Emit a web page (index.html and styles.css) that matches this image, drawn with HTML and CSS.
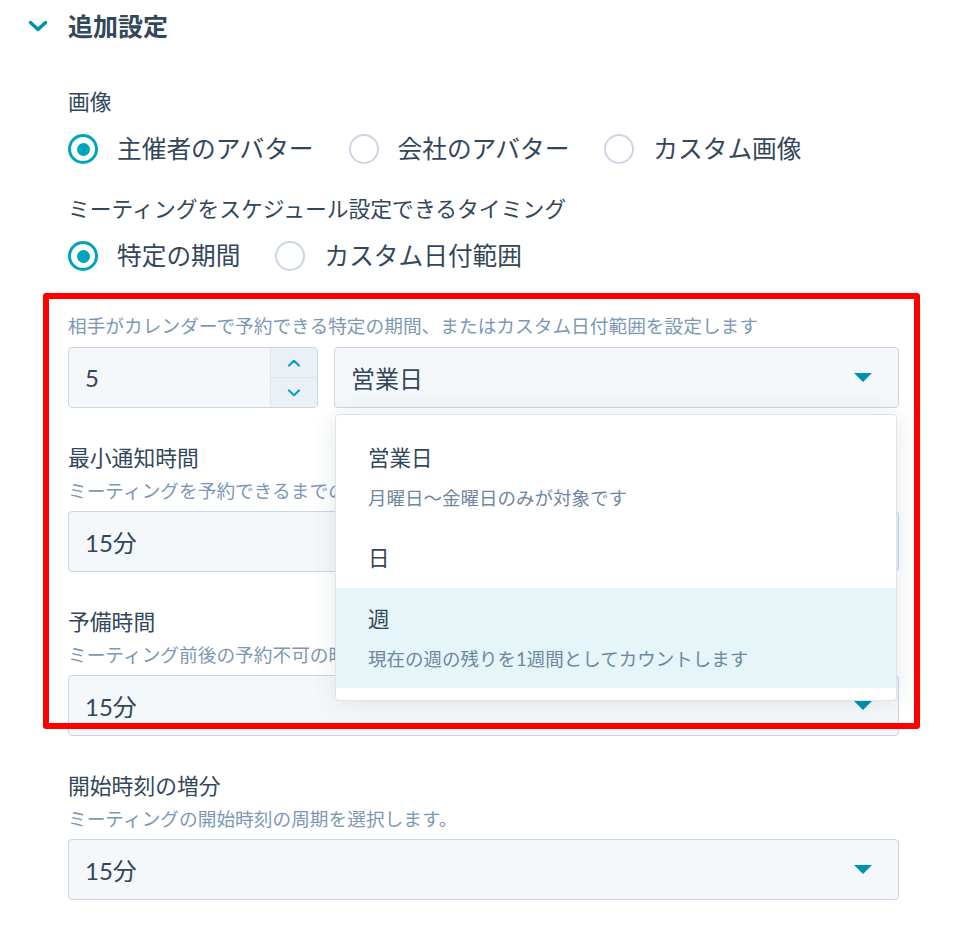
FILE: index.html
```html
<!DOCTYPE html>
<html lang="ja">
<head>
<meta charset="UTF-8">
<title>追加設定</title>
<link rel="stylesheet" href="styles.css">
</head>
<body>

<div class="section-head">
    <svg class="toggle-icon" width="20" height="12" viewBox="0 0 20 12"><path d="M2.5 2.5 L10 9.5 L17.5 2.5"/></svg>
    <h2 class="section-title">追加設定</h2>
</div>

<div class="settings">

    <!-- 画像 -->
    <div class="group group-image">
        <div class="field-label">画像</div>
        <div class="radio-group">
            <label class="radio checked"><span class="radio-dot"></span>主催者のアバター</label>
            <label class="radio"><span class="radio-dot"></span>会社のアバター</label>
            <label class="radio"><span class="radio-dot"></span>カスタム画像</label>
        </div>
    </div>

    <!-- タイミング -->
    <div class="group group-timing">
        <div class="field-label">ミーティングをスケジュール設定できるタイミング</div>
        <div class="radio-group">
            <label class="radio checked"><span class="radio-dot"></span>特定の期間</label>
            <label class="radio"><span class="radio-dot"></span>カスタム日付範囲</label>
        </div>
    </div>

    <!-- 期間 -->
    <div class="group group-range">
        <div class="help">相手がカレンダーで予約できる特定の期間、またはカスタム日付範囲を設定します</div>
        <div class="input-row">
            <div class="number-input">
                <span class="number-value">5</span>
                <div class="stepper">
                    <span class="step">
                        <svg width="14" height="8" viewBox="0 0 14 8"><path d="M2 6.5 L7 1.8 L12 6.5"/></svg>
                    </span>
                    <span class="step">
                        <svg width="14" height="8" viewBox="0 0 14 8"><path d="M2 1.5 L7 6.2 L12 1.5"/></svg>
                    </span>
                </div>
            </div>
            <div class="select open">
                <span class="select-value">営業日</span>
                <svg class="caret" width="18" height="9" viewBox="0 0 18 9"><polygon points="0,0 18,0 9,9"/></svg>

                <div class="dropdown">
                    <div class="option">
                        <div class="option-label">営業日</div>
                        <div class="option-desc">月曜日～金曜日のみが対象です</div>
                    </div>
                    <div class="option">
                        <div class="option-label">日</div>
                    </div>
                    <div class="option active">
                        <div class="option-label">週</div>
                        <div class="option-desc">現在の週の残りを1週間としてカウントします</div>
                    </div>
                </div>
            </div>
        </div>
    </div>

    <!-- 最小通知時間 -->
    <div class="group field">
        <div class="field-label">最小通知時間</div>
        <div class="help">ミーティングを予約できるまでの最短時間を設定します</div>
        <div class="select">
            <span class="select-value">15分</span>
            <svg class="caret" width="18" height="9" viewBox="0 0 18 9"><polygon points="0,0 18,0 9,9"/></svg>
        </div>
    </div>

    <!-- 予備時間 -->
    <div class="group field">
        <div class="field-label">予備時間</div>
        <div class="help">ミーティング前後の予約不可の時間を設定します</div>
        <div class="select">
            <span class="select-value">15分</span>
            <svg class="caret" width="18" height="9" viewBox="0 0 18 9"><polygon points="0,0 18,0 9,9"/></svg>
        </div>
    </div>

    <!-- 開始時刻の増分 -->
    <div class="group field">
        <div class="field-label">開始時刻の増分</div>
        <div class="help">ミーティングの開始時刻の周期を選択します。</div>
        <div class="select">
            <span class="select-value">15分</span>
            <svg class="caret" width="18" height="9" viewBox="0 0 18 9"><polygon points="0,0 18,0 9,9"/></svg>
        </div>
    </div>

</div>

<!-- annotation frame -->
<div class="annotation"></div>

</body>
</html>
```

FILE: styles.css
```css
body {
    margin: 0;
    font-family: Lato, "Noto Sans CJK JP", sans-serif;
    color: #33475b;
    background: #fff;
    position: relative;
}
.section-head {
    display: flex;
    align-items: center;
    gap: 20px;
    padding: 11px 0 0 28px;
}
.toggle-icon path {
    fill: none;
    stroke: #0091ae;
    stroke-width: 3.5;
    stroke-linecap: round;
    stroke-linejoin: round;
}
.section-title {
    margin: 0;
    font-size: 25px;
    font-weight: 700;
    line-height: 30px;
}
.settings {
    padding: 0 56px 0 68px;
}
.field-label {
    font-size: 21.8px;
    line-height: 28px;
}
.help {
    font-size: 18.7px;
    line-height: 26px;
    color: #7c98b6;
    white-space: nowrap;
}

/* radios */
.radio-group {
    display: flex;
    align-items: center;
    gap: 35px;
    height: 36px;
    margin-top: 15px;
}
.radio {
    display: flex;
    align-items: center;
    gap: 19px;
    font-size: 24.7px;
    line-height: 36px;
}
.radio-dot {
    width: 30px;
    height: 30px;
    box-sizing: border-box;
    border-radius: 50%;
    border: 2px solid #cbd6e2;
    background: #fff;
    display: flex;
    align-items: center;
    justify-content: center;
}
.radio.checked .radio-dot {
    border: 3px solid #00a4bd;
}
.radio.checked .radio-dot::after {
    content: "";
    width: 13px;
    height: 13px;
    border-radius: 50%;
    background: #00a4bd;
}

.group-image { margin-top: 47px; }
.group-timing { margin-top: 28px; }
.group-range { margin-top: 39px; }
.field { margin-top: 36px; }
.field .help { margin-top: 6px; }
.field .select { margin-top: 7px; }

/* inputs */
.input-row {
    display: flex;
    gap: 16px;
    margin-top: 8px;
}
.number-input,
.select {
    height: 61px;
    box-sizing: border-box;
    border: 1px solid #cbd6e2;
    border-radius: 4px;
    background: #f5f8fa;
    font-size: 24px;
}
.number-input {
    width: 250px;
    display: flex;
}
.number-value {
    flex: 1;
    display: flex;
    align-items: center;
    padding-left: 16px;
}
.stepper {
    width: 46px;
    display: flex;
    flex-direction: column;
    border-left: 1px solid #dfe5ec;
    background: #eaf0f6;
    border-radius: 0 3px 3px 0;
}
.step {
    flex: 1;
    display: flex;
    align-items: center;
    justify-content: center;
}
.step + .step {
    border-top: 1px solid #dfe5ec;
}
.step path {
    fill: none;
    stroke: #00a4bd;
    stroke-width: 2.2;
    stroke-linecap: round;
    stroke-linejoin: round;
}
.select {
    flex: 1;
    position: relative;
    display: flex;
    align-items: center;
    padding: 0 26px 0 16px;
}
.select-value {
    flex: 1;
}
.caret polygon {
    fill: #0091ae;
}

/* dropdown */
.dropdown {
    position: absolute;
    top: calc(100% + 7px);
    left: 0;
    right: 1px;
    z-index: 2;
    background: #fff;
    border: 1px solid #dfe3eb;
    border-radius: 4px;
    box-shadow: 0 1px 24px rgba(45, 62, 80, 0.12);
    padding: 12px 0;
}
.option {
    padding: 17px 32px 16px;
}
.option.active {
    background: #e5f5f8;
}
.option-label {
    font-size: 21.5px;
    line-height: 28px;
}
.option-desc {
    margin-top: 13px;
    font-size: 18.5px;
    line-height: 26px;
    color: #6f87a1;
}

/* red annotation frame */
.annotation {
    position: absolute;
    left: 43px;
    top: 293px;
    width: 877px;
    height: 436px;
    box-sizing: border-box;
    border: 6px solid #ff0000;
    border-radius: 3px;
    z-index: 3;
    pointer-events: none;
}
```
